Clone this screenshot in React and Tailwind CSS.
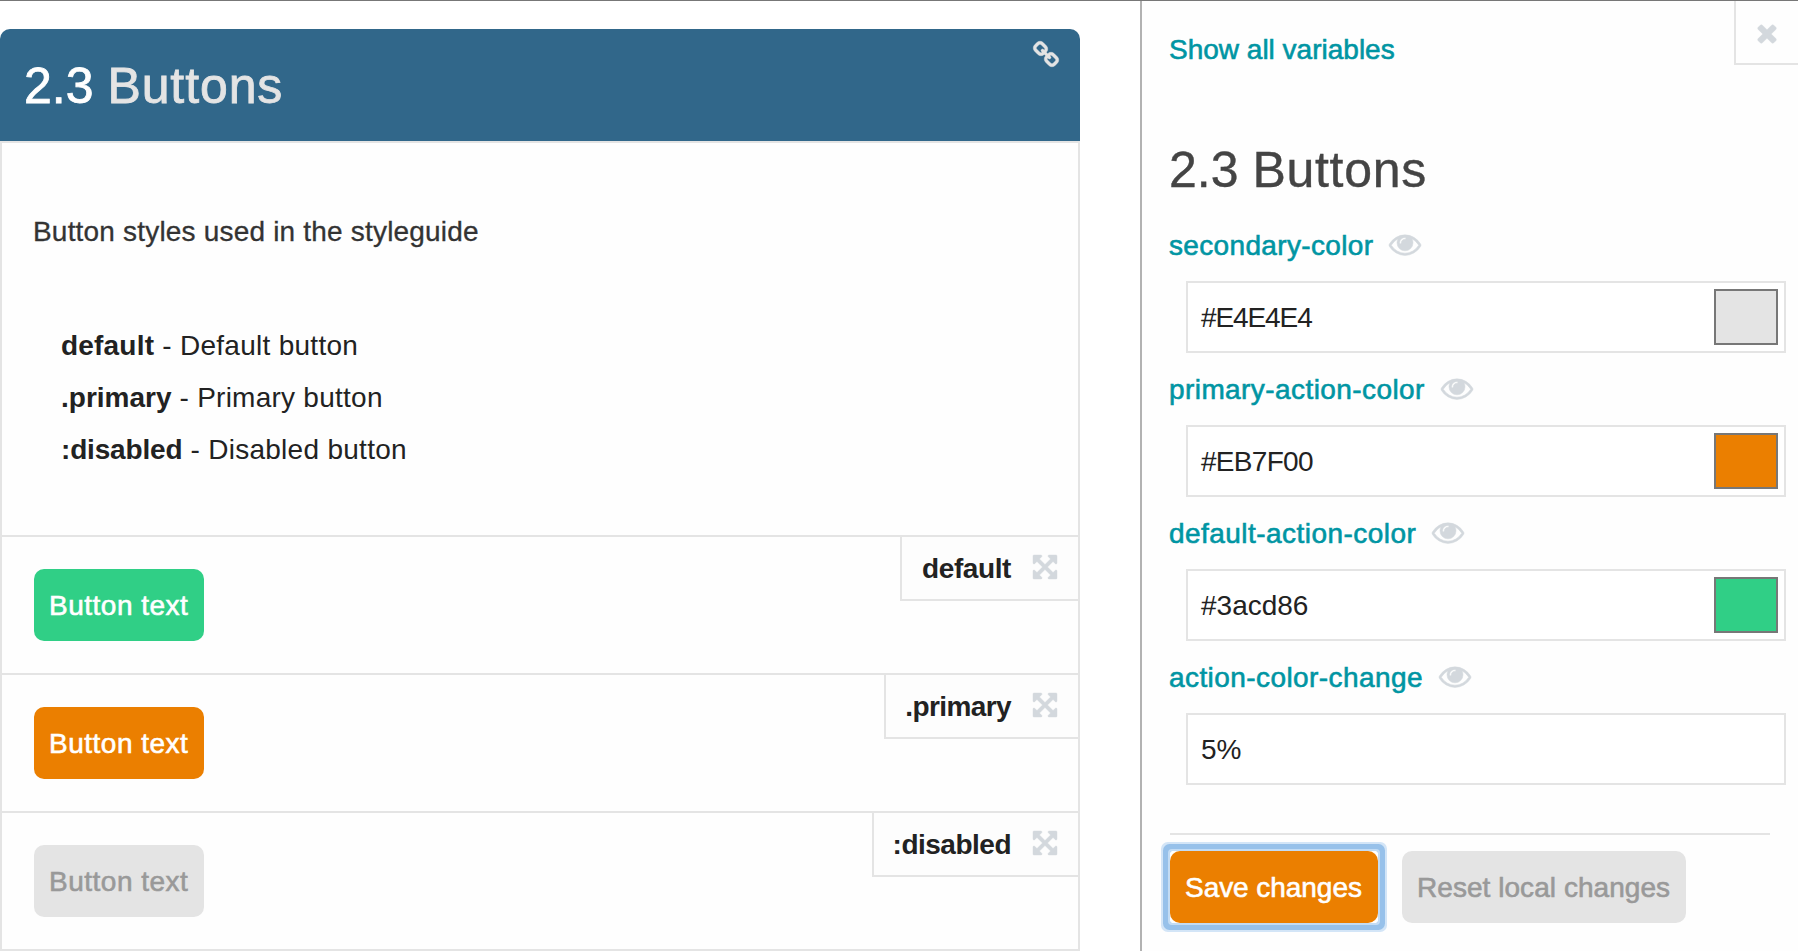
import React from "react";

const ICONS = {
  link: "M1456 1216q0-40-28-68l-208-208q-28-28-68-28-42 0-72 32 3 3 19 18.5t21.5 21.5 15 19 13 25.5 3.5 27.5q0 40-28 68t-68 28q-15 0-27.5-3.5t-25.5-13-19-15-21.5-21.5-18.5-19q-33 31-33 73 0 40 28 68l206 207q27 27 68 27 40 0 68-26l147-146q28-28 28-67zm-703-705q0-40-28-68l-206-207q-28-28-68-28-39 0-68 27l-147 146q-28 28-28 67 0 40 28 68l208 208q27 27 68 27 42 0 72-31-3-3-19-18.5t-21.5-21.5-15-19-13-25.5-3.5-27.5q0-40 28-68t68-28q15 0 27.5 3.5t25.5 13 19 15 21.5 21.5 18.5 19q33-31 33-73zm895 705q0 120-85 203l-147 146q-83 83-203 83-121 0-204-85l-206-207q-83-83-83-203 0-123 88-209l-88-88q-86 88-208 88-120 0-204-84l-208-208q-84-84-84-204t85-203l147-146q83-83 203-83 121 0 204 85l206 207q83 83 83 203 0 123-88 209l88 88q86-88 208-88 120 0 204 84l208 208q84 84 84 204z",
  close: "M1490 1322q0 40-28 68l-136 136q-28 28-68 28t-68-28l-294-294-294 294q-28 28-68 28t-68-28l-136-136q-28-28-28-68t28-68l294-294-294-294q-28-28-28-68t28-68l136-136q28-28 68-28t68 28l294 294 294-294q28-28 68-28t68 28l136 136q28 28 28 68t-28 68l-294 294 294 294q28 28 28 68z",
  eye: "M1664 960q-152-236-381-353 61 104 61 225 0 185-131.5 316.5t-316.5 131.5-316.5-131.5-131.5-316.5q0-121 61-225-229 117-381 353 133 205 333.5 326.5t434.5 121.5 434.5-121.5 333.5-326.5zm-720-384q0-20-14-34t-34-14q-125 0-214.5 89.5t-89.5 214.5q0 20 14 34t34 14 34-14 14-34q0-86 61-147t147-61q20 0 34-14t14-34zm848 384q0 34-20 69-140 230-376.5 368.5t-499.5 138.5-499.5-139-376.5-368q-20-35-20-69t20-69q140-229 376.5-368t499.5-139 499.5 139 376.5 368q20 35 20 69z",
  expand: "M1411 541l-355 355 355 355 144-144q29-31 70-14 39 17 39 59v448q0 26-19 45t-45 19h-448q-42 0-59-40-17-39 14-69l144-144-355-355-355 355 144 144q31 30 14 69-17 40-59 40h-448q-26 0-45-19t-19-45v-448q0-42 40-59 39-17 69 14l144 144 355-355-355-355-144 144q-19 19-45 19-12 0-24-5-40-17-40-59v-448q0-26 19-45t45-19h448q42 0 59 40 17 39-14 69l-144 144 355 355 355-355-144-144q-31-30-14-69 17-40 59-40h448q26 0 45 19t19 45v448q0 42-39 59-13 5-25 5-26 0-45-19z",
};

function Icon({ name, className }) {
  return (
    <svg
      viewBox="0 0 1792 1792"
      fill="currentColor"
      stroke="currentColor"
      strokeWidth="28"
      className={"shrink-0 overflow-visible " + className}
      aria-hidden="true"
    >
      <path d={ICONS[name]} />
    </svg>
  );
}

const MODIFIERS = [
  { name: "default", text: "Default button", nameClass: "tracking-[0.2px]", textClass: "tracking-[0.28px]" },
  { name: ".primary", text: "Primary button", nameClass: "tracking-[0px]", textClass: "tracking-[0.25px]" },
  { name: ":disabled", text: "Disabled button", nameClass: "tracking-[-0.17px]", textClass: "tracking-[0.28px]" },
];

const EXAMPLES = [
  {
    name: "default",
    tag: "w-[178px] tracking-[-0.4px]",
    button: "bg-[#30cf86] text-white [-webkit-text-stroke:0.6px_white]",
  },
  {
    name: ".primary",
    tag: "w-[194px] tracking-[-0.6px]",
    button: "bg-[#eb7f00] text-white [-webkit-text-stroke:0.6px_white]",
  },
  {
    name: ":disabled",
    tag: "w-[206px] tracking-[-0.5px]",
    button: "bg-[#e4e4e4] text-[#999] [-webkit-text-stroke:0.6px_#999]",
  },
];

const VARIABLES = [
  { name: "secondary-color", label: "tracking-[0.34px]", value: "#E4E4E4", input: "tracking-[-1.1px]", swatch: "bg-[#e4e4e4]" },
  { name: "primary-action-color", label: "tracking-[0.42px]", value: "#EB7F00", input: "tracking-[-0.7px]", swatch: "bg-[#eb7f00]" },
  { name: "default-action-color", label: "tracking-[0.46px]", value: "#3acd86", input: "tracking-[0px]", swatch: "bg-[#30cf86]" },
  { name: "action-color-change", label: "tracking-[0.42px]", value: "5%", input: "" },
];

function Example({ name, tag, button }) {
  return (
    <div className="flex h-[138px] items-start justify-between border-t-2 border-[#e4e4e4] pl-8">
      <button className={"mt-8 h-[72px] w-[170px] rounded-[10px] pt-[2px] pl-[15px] text-left tracking-[0.5px] " + button}>
        Button text
      </button>
      <div
        className={
          "flex h-16 items-center justify-end gap-[20px] border-b-2 border-l-2 border-[#e4e4e4] bg-[#fdfdfd] pr-[19px] font-bold text-[#222] " +
          tag
        }
      >
        <span className="pt-[2px]">{name}</span>
        <Icon name="expand" className="mb-[2px] size-7 text-[#d3d8dd]" />
      </div>
    </div>
  );
}

function Variable({ name, label, value, input, swatch }) {
  return (
    <div>
      <div className="-ml-px flex h-8 items-center gap-[16px] text-[#0095a3] [-webkit-text-stroke:0.6px_#0095a3]">
        <a className={"pt-[2px] " + label}>{name}</a>
        <Icon name="eye" className="mb-[3px] size-8 text-[#d3d8dd]" />
      </div>
      <div className="mt-5 ml-4 flex h-[72px] w-[600px] items-center justify-between border-2 border-[#e4e4e4] bg-white pr-[6px] pl-[13px]">
        <span className={"pt-[2px] text-[#222] " + input}>{value}</span>
        {swatch && <span className={"h-14 w-16 border-2 border-[#777] " + swatch} />}
      </div>
    </div>
  );
}

export default function App() {
  return (
    <div className="flex h-[951px] w-[1798px] overflow-hidden border-t border-[#777] bg-white font-['Liberation_Sans',Arial,sans-serif] text-[28px] leading-8">
      <main className="w-[1140px] pt-7">
        <section className="w-[1080px]">
          <header className="flex h-28 items-start justify-between rounded-t-[10px] bg-[#31678a] pr-[19px] pl-[24px] text-[#e4e4e4]">
            <h1 className="mt-[27px] text-[50px] leading-[60px] [-webkit-text-stroke:0.8px]">
              <span className="text-white">2.3 </span>
              <span className="tracking-[0.9px]">Buttons</span>
            </h1>
            <Icon name="link" className="mt-3 size-7" />
          </header>
          <div className="border-2 border-[#e4e4e4] bg-[#fefefe]">
            <div className="h-[392px] pt-[73px] pl-[31px]">
              <p className="tracking-[0.19px] text-[#333] [-webkit-text-stroke:0.3px]">Button styles used in the styleguide</p>
              <ul className="mt-[72px] pl-7 leading-[52px] text-[#222]">
                {MODIFIERS.map((m) => (
                  <li key={m.name} className={m.textClass}>
                    <b className={m.nameClass}>{m.name}</b> - {m.text}
                  </li>
                ))}
              </ul>
            </div>
            {EXAMPLES.map((e) => (
              <Example key={e.name} {...e} />
            ))}
          </div>
        </section>
      </main>

      <aside className="w-[658px] border-l-2 border-[#b2b2b2] bg-[#fefefe] pl-7">
        <div className="flex h-16 items-start justify-between">
          <a className="mt-[33px] -ml-px text-[#0095a3] [-webkit-text-stroke:0.6px_#0095a3]">
            Show all variables
          </a>
          <button className="flex size-16 justify-start border-b-2 border-l-2 border-[#e4e4e4] pt-[18px] pl-[17px] text-[#d3d8dd]">
            <Icon name="close" className="size-7" />
          </button>
        </div>
        <h2 className="mt-[75px] -ml-px text-[50px] leading-[60px] text-[#444] [-webkit-text-stroke:0.4px]">
          2.3 <span className="tracking-[0.7px]">Buttons</span>
        </h2>
        <div className="mt-[29px] flex flex-col gap-5">
          {VARIABLES.map((v) => (
            <Variable key={v.name} {...v} />
          ))}
        </div>
        <div className="mt-12 flex w-[600px] gap-6 border-t-2 border-[#e4e4e4] pt-4">
          <div className="rounded-[2px] shadow-[0_0_0_2px_#c3dcf4,0_0_0_7px_#97c1ea,0_0_0_9px_#d3e5f7]">
            <button className="block h-[72px] w-52 rounded-[10px] bg-[#eb7f00] pt-[2px] pl-[15px] text-left tracking-[-0.05px] text-white [-webkit-text-stroke:0.6px_white]">
              Save changes
            </button>
          </div>
          <button className="h-[72px] w-[284px] rounded-[10px] bg-[#e4e4e4] pt-[2px] pl-[15px] text-left tracking-[0.05px] text-[#999] [-webkit-text-stroke:0.6px_#999]">
            Reset local changes
          </button>
        </div>
      </aside>
    </div>
  );
}
